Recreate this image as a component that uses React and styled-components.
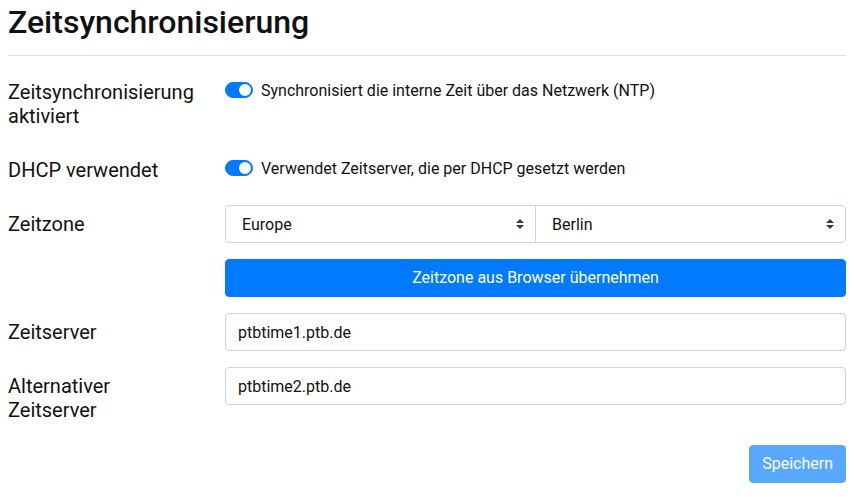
import React from 'react'
import styled, { createGlobalStyle } from 'styled-components'

const GlobalStyle = createGlobalStyle`
  * { box-sizing: border-box; }
  body {
    margin: 0;
    background: #fff;
    font-family: Roboto, "Liberation Sans", Arial, sans-serif;
    color: #212529;
  }
`

const Page = styled.div`
  width: 856px;
  padding: 3px 10px 0 8px;
`

const Title = styled.h2`
  margin: 0;
  font-size: 32px;
  line-height: 38px;
  font-weight: 500;
  color: #111;
`

const Divider = styled.hr`
  margin: 14px 0 17px;
  border: 0;
  border-top: 1px solid #dfdfdf;
`

const Row = styled.div`
  display: grid;
  grid-template-columns: 217px 1fr;
  margin-bottom: 16px;
`

const Label = styled.label`
  padding: 7px 24px 7px 0;
  font-size: 20px;
  line-height: 24px;
  color: #111;
`

const Controls = styled.div`
  display: flex;
  flex-direction: column;
  gap: 16px;
`

const SwitchWrap = styled.label`
  position: relative;
  display: flex;
  padding: 6px 0 0 36px;
  font-size: 16px;
  line-height: 24px;
  color: #111;
  cursor: pointer;
`

const Track = styled.span`
  position: absolute;
  left: 0;
  top: ${p => p.$top}px;
  width: 28px;
  height: 16px;
  border-radius: 8px;
  background: ${p => (p.$on ? '#007bff' : '#fff')};
  border: 1px solid ${p => (p.$on ? '#007bff' : '#adb5bd')};

  &::after {
    content: '';
    position: absolute;
    top: 1px;
    left: ${p => (p.$on ? '13px' : '1px')};
    width: 12px;
    height: 12px;
    border-radius: 50%;
    background: ${p => (p.$on ? '#fff' : '#adb5bd')};
  }
`

const SelectGroup = styled.div`
  display: flex;
`

const SelectBox = styled.div`
  position: relative;
  flex: 1;
  margin-left: ${p => (p.$first ? 0 : '-1px')};
`

const Select = styled.select`
  appearance: none;
  width: 100%;
  height: 38px;
  padding: 6px 28px 6px 16px;
  font-family: inherit;
  font-size: 16px;
  color: #111;
  background: #fff;
  border: 1px solid #ced4da;
  border-radius: ${p => (p.$first ? '4px 0 0 4px' : '0 4px 4px 0')};
  outline: none;
`

const Arrows = styled.svg`
  position: absolute;
  right: 12px;
  top: 14px;
  pointer-events: none;
`

const Input = styled.input`
  width: 100%;
  height: 38px;
  padding: 6px 12px;
  font-family: inherit;
  font-size: 16px;
  color: #111;
  border: 1px solid #ced4da;
  border-radius: 4px;
  outline: none;
`

const Button = styled.button`
  height: 38px;
  padding: 6px 12px;
  font-family: inherit;
  font-size: 16px;
  line-height: 24px;
  color: #fff;
  background: #007bff;
  border: 1px solid #007bff;
  border-radius: 4px;
  width: ${p => (p.$block ? '100%' : 'auto')};
  opacity: ${p => (p.disabled ? 0.65 : 1)};
`

const Footer = styled.div`
  display: flex;
  justify-content: flex-end;
`

const Toggle = ({ text, top }) => (
  <SwitchWrap>
    <Track $on $top={top} />
    {text}
  </SwitchWrap>
)

const ZoneSelect = ({ value, first }) => (
  <SelectBox $first={first}>
    <Select $first={first} defaultValue={value}>
      <option>{value}</option>
    </Select>
    <Arrows width='8' height='10' viewBox='0 0 4 5'>
      <path d='M2 0L0 2h4zm0 5L0 3h4z' fill='#343a40' />
    </Arrows>
  </SelectBox>
)

export default function App () {
  return (
    <Page>
      <GlobalStyle />
      <Title>Zeitsynchronisierung</Title>
      <Divider />

      <Row>
        <Label>Zeitsynchronisierung aktiviert</Label>
        <Toggle top={9} text='Synchronisiert die interne Zeit über das Netzwerk (NTP)' />
      </Row>

      <Row>
        <Label>DHCP verwendet</Label>
        <Toggle top={9} text='Verwendet Zeitserver, die per DHCP gesetzt werden' />
      </Row>

      <Row>
        <Label>Zeitzone</Label>
        <Controls>
          <SelectGroup>
            <ZoneSelect first value='Europe' />
            <ZoneSelect value='Berlin' />
          </SelectGroup>
          <Button $block>Zeitzone aus Browser übernehmen</Button>
        </Controls>
      </Row>

      <Row>
        <Label>Zeitserver</Label>
        <Input defaultValue='ptbtime1.ptb.de' />
      </Row>

      <Row>
        <Label>Alternativer Zeitserver</Label>
        <Input defaultValue='ptbtime2.ptb.de' />
      </Row>

      <Footer>
        <Button disabled>Speichern</Button>
      </Footer>
    </Page>
  )
}
